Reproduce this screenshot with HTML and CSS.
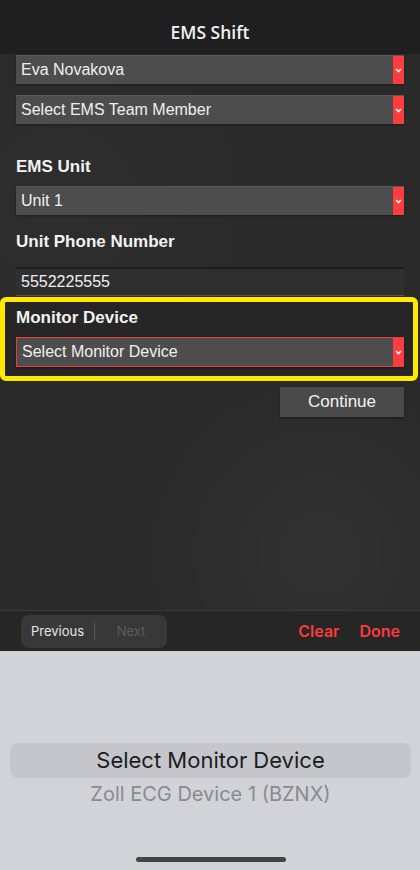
FILE: index.html
```html
<!DOCTYPE html>
<html lang="en">
<head>
    <meta charset="UTF-8">
    <meta name="viewport" content="width=device-width, initial-scale=1.0">
    <title>EMS Shift</title>
    <link rel="stylesheet" href="styles.css">
</head>
<body>
    <div class="screen">
        <header class="topbar">
            <h1>EMS Shift</h1>
        </header>

        <main class="form">
            <div class="select first">
                <span class="value">Eva Novakova</span>
                <span class="arrow"><svg width="7" height="5" viewBox="0 0 7 5"><path d="M1 1 L3.5 3.5 L6 1" fill="none" stroke="#fff" stroke-width="1.6"/></svg></span>
            </div>
            <div class="select second">
                <span class="value">Select EMS Team Member</span>
                <span class="arrow"><svg width="7" height="5" viewBox="0 0 7 5"><path d="M1 1 L3.5 3.5 L6 1" fill="none" stroke="#fff" stroke-width="1.6"/></svg></span>
            </div>

            <label class="label unit-label">EMS Unit</label>
            <div class="select">
                <span class="value">Unit 1</span>
                <span class="arrow"><svg width="7" height="5" viewBox="0 0 7 5"><path d="M1 1 L3.5 3.5 L6 1" fill="none" stroke="#fff" stroke-width="1.6"/></svg></span>
            </div>

            <label class="label phone-label">Unit Phone Number</label>
            <div class="text-input">5552225555</div>

            <!-- bloque resaltado -->
            <div class="highlight">
                <label class="label">Monitor Device</label>
                <div class="select invalid">
                    <span class="value">Select Monitor Device</span>
                    <span class="arrow"><svg width="7" height="5" viewBox="0 0 7 5"><path d="M1 1 L3.5 3.5 L6 1" fill="none" stroke="#fff" stroke-width="1.6"/></svg></span>
                </div>
            </div>

            <div class="actions">
                <button class="continue">Continue</button>
            </div>
        </main>

        <div class="toolbar">
            <div class="nav-group">
                <span class="nav prev">Previous</span>
                <span class="divider"></span>
                <span class="nav next">Next</span>
            </div>
            <div class="toolbar-actions">
                <span class="tool-btn">Clear</span>
                <span class="tool-btn">Done</span>
            </div>
        </div>

        <div class="picker">
            <div class="picker-row selected">Select Monitor Device</div>
            <div class="picker-row">Zoll ECG Device 1 (BZNX)</div>
            <div class="home-bar"></div>
        </div>
    </div>
</body>
</html>
```

FILE: styles.css
```css
* {
    box-sizing: border-box;
}
body {
    margin: 0;
    background-color: #1f1f1f;
    font-family: "Liberation Sans", Arial, sans-serif;
}
.screen {
    width: 420px;
    height: 870px;
    display: flex;
    flex-direction: column;
    overflow: hidden;
}
.topbar {
    height: 54px;
    flex-shrink: 0;
    background-color: #1f1f1f;
    display: flex;
    justify-content: center;
    align-items: flex-end;
}
.topbar h1 {
    margin: 0 0 10px;
    font-family: "Open Sans", sans-serif;
    font-weight: 600;
    font-size: 17.5px;
    color: #f2f2f2;
}
.form {
    flex: 1;
    display: flex;
    flex-direction: column;
    padding: 0 16px;
    background-color: #2a2a2a;
    background-image:
        radial-gradient(circle at 320px 500px, rgba(255,255,255,0.04), rgba(255,255,255,0) 180px),
        radial-gradient(circle at 60px 150px, rgba(255,255,255,0.02), rgba(255,255,255,0) 200px);
}
.select {
    height: 29px;
    display: flex;
    align-items: stretch;
    background-color: #4d4d4d;
    border-top: 1px solid #5a5a5a;
    box-shadow: 0 1px 2px rgba(0,0,0,0.35);
}
.select.first {
    margin-top: 1px;
}
.select.second {
    margin-top: 11px;
}
.select .value {
    flex: 1;
    display: flex;
    align-items: center;
    padding-left: 5px;
    font-size: 16px;
    color: #f0f0f0;
}
.select .arrow {
    width: 11px;
    background-color: #fc3d3d;
    display: flex;
    align-items: center;
    justify-content: center;
}
.select.invalid {
    height: 30px;
    border: 1px solid #f03a3a;
    border-right: none;
}
.label {
    display: block;
    font-weight: bold;
    font-size: 17px;
    line-height: 20px;
    color: #f2f2f2;
    margin-bottom: 9px;
}
.unit-label {
    margin-top: 33px;
}
.phone-label {
    margin-top: 17px;
    margin-bottom: 15px;
}
.text-input {
    height: 29px;
    display: flex;
    align-items: center;
    padding-left: 5px;
    font-size: 16px;
    color: #f0f0f0;
    background-color: #2f2f2f;
    border-top: 2px solid #1c1c1c;
    border-bottom: 1px solid #555;
}
.highlight {
    margin: 1px -14px 0 -16px;
    padding: 6px 9px 9px 11px;
    border: 5px solid #ffe900;
    border-radius: 6px;
    background-color: #262626;
}
.actions {
    display: flex;
    justify-content: flex-end;
    margin-top: 6px;
}
.continue {
    width: 124px;
    height: 30px;
    border: none;
    background-color: #4a4a4a;
    box-shadow: 0 1px 2px rgba(0,0,0,0.4);
    color: #f2f2f2;
    font-family: "Liberation Sans", Arial, sans-serif;
    font-size: 17px;
}
.toolbar {
    height: 41px;
    flex-shrink: 0;
    background-color: #262626;
    border-top: 1px solid #3b3b3b;
    display: flex;
    align-items: center;
    justify-content: space-between;
    padding: 0 20px 0 21px;
}
.nav-group {
    width: 146px;
    height: 33px;
    border-radius: 8px;
    background-color: #383838;
    display: flex;
    align-items: center;
    font-family: Inter, "Noto Sans", sans-serif;
    font-size: 13px;
}
.nav {
    flex: 1;
    text-align: center;
}
.prev {
    color: #e6e6e6;
    flex: 0 0 73px;
}
.next {
    color: #5c5c5c;
}
.divider {
    width: 1px;
    height: 20px;
    background-color: #555;
}
.toolbar-actions {
    display: flex;
    gap: 20px;
}
.tool-btn {
    font-family: Inter, "Noto Sans", sans-serif;
    font-weight: 600;
    font-size: 16px;
    color: #fa3b3b;
}
.picker {
    height: 219px;
    flex-shrink: 0;
    background-color: #d1d3d9;
    display: flex;
    flex-direction: column;
    align-items: center;
    padding: 92px 9px 0 10px;
}
.picker-row {
    width: 100%;
    text-align: center;
    font-family: Inter, "Noto Sans", sans-serif;
    font-size: 20px;
    color: #8a8a8e;
    height: 32px;
    line-height: 32px;
}
.picker-row.selected {
    height: 35px;
    line-height: 35px;
    border-radius: 8px;
    background-color: #c4c6cc;
    color: #1c1c1e;
    font-size: 22px;
}
.home-bar {
    margin-top: auto;
    margin-bottom: 8px;
    width: 150px;
    height: 5px;
    border-radius: 3px;
    background-color: #444;
}
```
